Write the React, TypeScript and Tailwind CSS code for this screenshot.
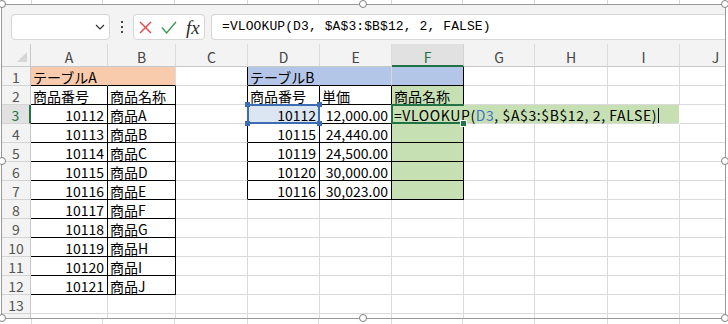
import React from "react";

// Sheet data
const codesA = [10112, 10113, 10114, 10115, 10116, 10117, 10118, 10119, 10120, 10121];
const namesA = ["A", "B", "C", "D", "E", "F", "G", "H", "I", "J"];
const codesD = [10112, 10115, 10119, 10120, 10116];
const prices = ["12,000.00", "24,440.00", "24,500.00", "30,000.00", "30,023.00"];
const letters = ["A", "B", "C", "D", "E", "F", "G", "H", "I", "J"];

const GRID = "border-r-[#dadada] border-b-[#dadada]";
const BOX = "border-r-black border-b-black";
const SIDE = "border-r-black border-b-[#dadada]";

type CellProps = {
  children?: React.ReactNode;
  className?: string;
  right?: boolean;
};

const Cell = ({ children, className = GRID, right }: CellProps) => (
  <div
    className={`h-[19px] border-r border-b flex items-end pb-[1px] leading-[14px] text-[14px] text-black whitespace-nowrap ${
      right ? "justify-end pr-[3px]" : "pl-[2px]"
    } ${className}`}
  >
    {children}
  </div>
);

const RowHead = ({ n, active }: { n: number; active?: boolean }) => (
  <div
    className={`h-[19px] border-b border-b-[#d4d4d4] flex items-end justify-center pb-[1px] leading-[14px] text-[14px] ${
      active
        ? "bg-[#e1e1e1] text-[#217346] border-r-2 border-r-[#217346]"
        : "bg-[#f3f3f3] text-[#555] border-r border-r-[#c8c8c8]"
    }`}
  >
    {n}
  </div>
);

const Blank = ({ count }: { count: number }) => (
  <>
    {Array.from({ length: count }).map((_, i) => (
      <Cell key={i} />
    ))}
  </>
);

// Lines of the sheet lying under the picture frame
const UnderStrip = ({ h }: { h: string }) => (
  <div className={`flex ${h}`}>
    <div className="w-[32px] border-r border-[#d9d9d9]" />
    <div className="w-[71px] border-r border-[#d9d9d9]" />
    <div className="w-[72px] border-r border-[#d9d9d9]" />
    <div className="w-[73px] border-r border-[#d9d9d9]" />
    <div className="w-[71px] border-r border-[#d9d9d9]" />
    <div className="w-[73px] border-r border-[#d9d9d9]" />
    <div className="w-[71px] border-r border-[#d9d9d9]" />
    <div className="w-[72px] border-r border-[#d9d9d9]" />
    <div className="w-[73px] border-r border-[#d9d9d9]" />
    <div className="w-[72px] border-r border-[#d9d9d9]" />
    <div className="flex-1" />
  </div>
);

const Handle = ({ className }: { className: string }) => (
  <div className={`absolute w-[8px] h-[8px] rounded-full bg-white border border-[#808080] ${className}`} />
);

const FormulaBar = () => (
  <div className="h-[39px] shrink-0 bg-[#f3f3f3] flex items-start pt-[9px] pl-[9px]">
    <div className="w-[99px] h-[26px] bg-white border border-[#d6d6d6] rounded-[4px] flex items-center justify-end pr-[4px]">
      <svg width="10" height="6" viewBox="0 0 10 6" fill="none">
        <polyline points="1,1 5,5 9,1" stroke="#333" strokeWidth="1.2" />
      </svg>
    </div>
    <div className="w-[23px] h-[26px] flex flex-col items-center justify-center gap-[3px]">
      <div className="w-[2px] h-[2px] bg-[#444]" />
      <div className="w-[2px] h-[2px] bg-[#444]" />
      <div className="w-[2px] h-[2px] bg-[#444]" />
    </div>
    <div className="w-[72px] h-[26px] bg-white border border-[#d6d6d6] rounded-[4px] flex items-center pl-[5px]">
      <svg width="13" height="13" viewBox="0 0 13 13" fill="none">
        <line x1="1" y1="1" x2="12" y2="12" stroke="#e0464c" strokeWidth="1.4" />
        <line x1="12" y1="1" x2="1" y2="12" stroke="#e0464c" strokeWidth="1.4" />
      </svg>
      <svg className="ml-[9px]" width="16" height="13" viewBox="0 0 16 13" fill="none">
        <polyline points="1,6.5 5.5,12 15,1" stroke="#3d9a55" strokeWidth="1.4" />
      </svg>
      <span className="ml-[9px] font-['Liberation_Serif',serif] italic text-[19px] leading-[19px] text-[#2b2b2b]">
        fx
      </span>
    </div>
    <div className="ml-[6px] flex-1 h-[26px] bg-white border border-r-0 border-[#d6d6d6] rounded-l-[4px] flex items-center pl-[10px] font-['Liberation_Mono',monospace] text-[13px] tracking-[0.1px] text-black">
      =VLOOKUP(D3, $A$3:$B$12, 2, FALSE)
    </div>
  </div>
);

const HeaderRow = () => (
  <>
    <div className="h-[23px] bg-[#f3f3f3] border-r border-b border-[#c8c8c8] relative">
      <div className="absolute right-[3px] bottom-[4px] w-0 h-0 border-l-[10px] border-l-transparent border-b-[10px] border-b-[#d6d6d6]" />
    </div>
    {letters.map((l) =>
      l === "F" ? (
        <div
          key={l}
          className="h-[23px] bg-[#e1e1e1] border-r border-r-[#d4d4d4] border-b-2 border-b-[#217346] flex items-end justify-center pb-[1px] leading-[14px] text-[14px] text-[#217346]"
        >
          {l}
        </div>
      ) : (
        <div
          key={l}
          className="h-[23px] bg-[#f3f3f3] border-r border-r-[#dadada] border-b border-b-[#c8c8c8] flex items-end justify-center pb-[2px] leading-[14px] text-[14px] text-[#444]"
        >
          {l}
        </div>
      )
    )}
  </>
);

export default function App() {
  return (
    <div className="relative w-[728px] h-[324px] overflow-hidden bg-white font-['Noto_Sans_CJK_JP','Noto_Sans',sans-serif]">
      <UnderStrip h="h-[4px]" />
      <div className="ml-[1px] w-[725px] h-[315px] border border-[#9a9a9a] flex flex-col overflow-hidden">
        <FormulaBar />
        <div className="grid grid-cols-[29px_77px_68px_72px_72px_72px_72px_71px_73px_72px_72px] w-[760px]">
          <HeaderRow />

          {/* row 1 */}
          <RowHead n={1} />
          <Cell className="bg-[#f8cbad] border-r-[#f8cbad] border-b-black">テーブルA</Cell>
          <Cell className="bg-[#f8cbad] border-r-[#dadada] border-b-black" />
          <Cell className={SIDE} />
          <Cell className="bg-[#b4c6e7] border-r-[#b4c6e7] border-b-black">テーブルB</Cell>
          <Cell className="bg-[#b4c6e7] border-r-[#d9d9d9] border-b-black" />
          <Cell className="bg-[#b4c6e7] border-r-black border-b-black" />
          <Blank count={4} />

          {/* row 2 */}
          <RowHead n={2} />
          <Cell className={BOX}>商品番号</Cell>
          <Cell className={BOX}>商品名称</Cell>
          <Cell className={SIDE} />
          <Cell className={BOX}>商品番号</Cell>
          <Cell className={BOX}>単価</Cell>
          <Cell className={`bg-[#c6e0b4] ${BOX}`}>商品名称</Cell>
          <Blank count={4} />

          {/* rows 3 - 12 */}
          {codesA.map((code, i) => {
            const row = i + 3;
            const inB = i < codesD.length;
            return (
              <React.Fragment key={row}>
                <RowHead n={row} active={row === 3} />
                <Cell className={BOX} right>
                  {code}
                </Cell>
                <Cell className={BOX}>商品{namesA[i]}</Cell>
                <Cell className={inB ? SIDE : GRID} />
                {inB ? (
                  <>
                    {row === 3 ? (
                      <div className="relative h-[19px] border-r border-b border-r-black border-b-black bg-[#dce6f3] flex items-end justify-end pr-[3px] pb-[1px] leading-[14px] text-[14px] text-black">
                        {codesD[i]}
                        <div className="absolute left-[-1px] top-[-1px] w-[73px] h-[20px] border-2 border-[#3c6db4]" />
                        <div className="absolute left-[-3px] top-[-3px] w-[5px] h-[5px] bg-[#3c6db4]" />
                        <div className="absolute right-[-3px] top-[-3px] w-[5px] h-[5px] bg-[#3c6db4]" />
                        <div className="absolute left-[-3px] bottom-[-3px] w-[5px] h-[5px] bg-[#3c6db4]" />
                        <div className="absolute right-[-3px] bottom-[-3px] w-[5px] h-[5px] bg-[#3c6db4]" />
                      </div>
                    ) : (
                      <Cell className={BOX} right>
                        {codesD[i]}
                      </Cell>
                    )}
                    <Cell className={BOX} right>
                      {prices[i]}
                    </Cell>
                    {row === 3 ? (
                      <>
                        <div className="relative h-[19px] border-r border-b border-r-[#c6e0b4] border-b-black bg-[#c6e0b4] flex items-end pl-[2px] pb-[1px] leading-[14px] text-[14px] text-black whitespace-nowrap">
                          <span className="relative z-10 flex items-end tracking-[0.6px]">
                            =VLOOKUP(<span className="text-[#4472c4]">D3</span>, $A$3:$B$12, 2, FALSE)
                            <span className="inline-block w-[1px] h-[15px] bg-black ml-[1px] mb-[-1px]" />
                          </span>
                          <div className="absolute left-[-1px] top-[-1px] bottom-[-1px] w-[73px] border-l-2 border-t-2 border-b-2 border-[#217346]" />
                          <div className="absolute right-[-4px] bottom-[-4px] w-[7px] h-[7px] bg-[#217346] border border-white z-20" />
                        </div>
                        <div className="col-span-3 h-[19px] border-b border-b-[#dadada] bg-[#c6e0b4] mr-[1px]" />
                        <Cell />
                      </>
                    ) : (
                      <>
                        <Cell className={`bg-[#c6e0b4] ${BOX}`} />
                        <Blank count={4} />
                      </>
                    )}
                  </>
                ) : (
                  <Blank count={7} />
                )}
              </React.Fragment>
            );
          })}

          {/* row 13 */}
          <RowHead n={13} />
          <Blank count={10} />

          {/* row 14, cut off */}
          <div className="h-[4px] bg-[#f3f3f3] border-r border-[#c8c8c8]" />
          {letters.map((l) => (
            <div key={l} className="h-[4px] border-r border-[#dadada]" />
          ))}
        </div>
      </div>
      <UnderStrip h="h-[5px]" />

      <Handle className="left-[-2px] top-[0px]" />
      <Handle className="left-[359px] top-[0px]" />
      <Handle className="left-[721px] top-[0px]" />
      <Handle className="left-[-2px] top-[157px]" />
      <Handle className="left-[721px] top-[157px]" />
      <Handle className="left-[-2px] top-[314px]" />
      <Handle className="left-[359px] top-[314px]" />
      <Handle className="left-[721px] top-[314px]" />
    </div>
  );
}
